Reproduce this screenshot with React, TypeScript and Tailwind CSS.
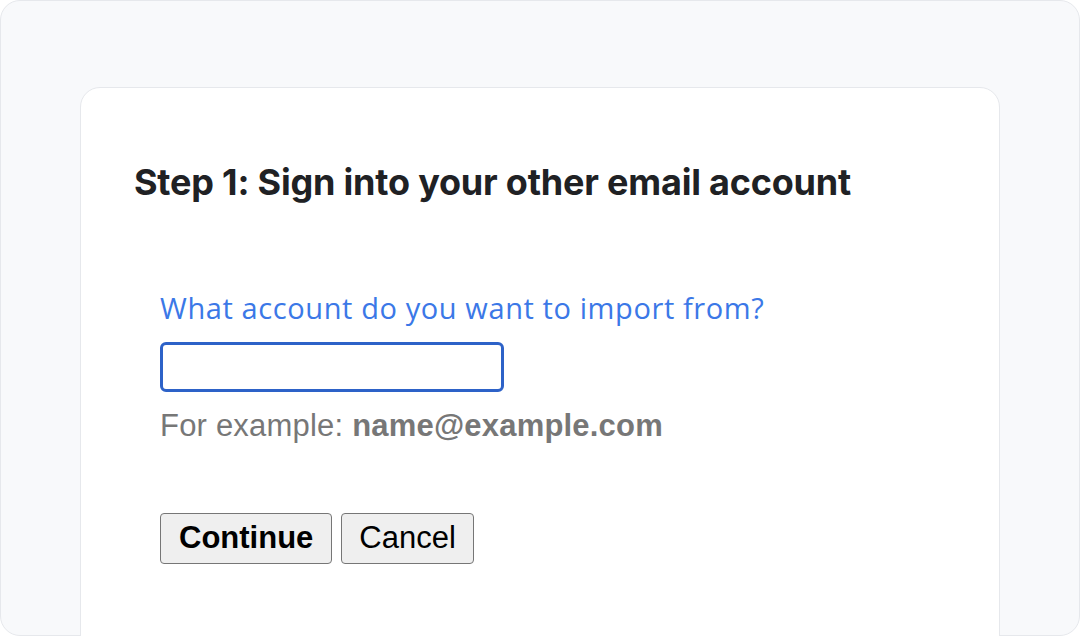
export default function App() {
  return (
    <div className="h-[636px] w-[1080px] overflow-hidden bg-white">
      <div className="h-[636px] w-[1080px] rounded-[20px] border border-[#e6e8ec] bg-[#f8f9fb] pl-[79px] pr-[79px] pt-[86px]">
        <div
          className="h-[600px] rounded-t-[20px] border border-[#e6e8ec] bg-white pl-[53px] pt-[72px]"
          style={{ fontFamily: '"Liberation Sans", Arial, sans-serif' }}
        >
          <h1 className="font-['Inter',sans-serif] text-[36px] font-bold leading-[44px] tracking-[-0.2px] text-[#202124]">
            Step 1: Sign into your other email account
          </h1>
          <div className="pl-[26px] pt-[86px]">
            <label className="block font-['Open_Sans',sans-serif] text-[29px] leading-[36px] tracking-[0.6px] text-[#3b78e7]">
              What account do you want to import from?
            </label>
            <input
              type="text"
              className="mt-[16px] block h-[50px] w-[344px] rounded-[6px] border-[3px] border-[#2d62c8] bg-white outline-none"
            />
            <p className="mt-[16px] text-[31px] leading-[36px] tracking-[0.2px] text-[#777777]">
              For example: <span className="font-bold">name@example.com</span>
            </p>
            <div className="mt-[69px] flex gap-[9px]">
              <button className="h-[51px] rounded-[4px] border-[1.5px] border-[#767676] bg-[#efefef] px-[18px] text-[31px] font-bold text-black">
                Continue
              </button>
              <button className="h-[51px] rounded-[4px] border-[1.5px] border-[#767676] bg-[#efefef] px-[17px] text-[31px] text-black">
                Cancel
              </button>
            </div>
          </div>
        </div>
      </div>
    </div>
  );
}
